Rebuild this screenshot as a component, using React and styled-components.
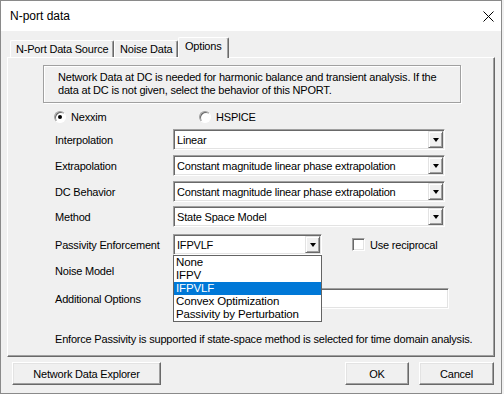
import React from 'react';
import styled, { createGlobalStyle } from 'styled-components';

const GlobalStyle = createGlobalStyle`
  html, body {
    margin: 0;
    padding: 0;
    background: #f0f0f0;
  }
  body {
    font-family: "Liberation Sans", Arial, sans-serif;
    font-size: 11px;
    letter-spacing: -0.2px;
    color: #000;
  }
`;

const Window = styled.div`
  width: 502px;
  height: 394px;
  box-sizing: border-box;
  border: 1px solid #8a8a8a;
  background: #f0f0f0;
  display: flex;
  flex-direction: column;
`;

const TitleBar = styled.div`
  height: 30px;
  flex: none;
  background: #fff;
  display: flex;
  align-items: center;
  justify-content: space-between;
  padding: 0 7px 0 9px;
  font-size: 12px;
  letter-spacing: 0;
`;

const Body = styled.div`
  flex: 1;
  display: flex;
  flex-direction: column;
  padding: 6px 6px 0 6px;
`;

const TabStrip = styled.div`
  height: 20px;
  display: flex;
  align-items: flex-end;
  padding-left: 3px;
  position: relative;
  z-index: 1;
`;

const Tab = styled.div`
  box-sizing: border-box;
  height: ${p => (p.$active ? 21 : 17)}px;
  margin-bottom: ${p => (p.$active ? -1 : 0)}px;
  width: ${p => p.$w}px;
  background: #f0f0f0;
  border-top: 1px solid #fff;
  border-left: 1px solid #fff;
  border-right: 1px solid #696969;
  box-shadow: inset -1px 0 0 #a0a0a0;
  border-radius: 2px 2px 0 0;
  padding: ${p => (p.$active ? '2px 0 0 6px' : '2px 0 0 5px')};
  line-height: 13px;
  white-space: nowrap;
`;

const Panel = styled.div`
  height: 300px;
  box-sizing: border-box;
  border-top: 1px solid #fff;
  border-left: 1px solid #fff;
  border-right: 1px solid #696969;
  border-bottom: 1px solid #696969;
  box-shadow: inset -1px -1px 0 #a0a0a0;
  display: flex;
  flex-direction: column;
`;

const InfoBox = styled.div`
  margin: 7px 0 0 35px;
  width: 418px;
  height: 38px;
  box-sizing: border-box;
  border: 1px solid #a0a0a0;
  box-shadow: 1px 1px 0 #fff, inset 1px 1px 0 #fff;
  padding: 5px 0 0 14px;
  line-height: 13px;
`;

const RadioRow = styled.div`
  margin: 7px 0 0 46px;
  height: 13px;
  display: flex;
  align-items: center;
`;

const RadioItem = styled.label`
  width: ${p => p.$w}px;
  display: flex;
  align-items: center;
  gap: 5px;
`;

const RadioCircle = styled.span`
  width: 12px;
  height: 12px;
  box-sizing: border-box;
  border-radius: 50%;
  border: 1px solid;
  border-color: #a0a0a0 #fff #fff #a0a0a0;
  background: #fff;
  box-shadow: inset 1px 1px 0 #696969;
  display: flex;
  align-items: center;
  justify-content: center;
  &::after {
    content: '';
    width: 4px;
    height: 4px;
    border-radius: 50%;
    background: ${p => (p.$on ? '#000' : 'transparent')};
  }
`;

const Row = styled.div`
  margin-top: ${p => p.$gap}px;
  padding-left: 47px;
  height: ${p => p.$h || 21}px;
  display: flex;
  align-items: center;
`;

const Label = styled.div`
  width: 118px;
  flex: none;
`;

const Combo = styled.div`
  position: relative;
  width: ${p => p.$w}px;
  height: 21px;
  box-sizing: border-box;
  border: 1px solid;
  border-color: #a0a0a0 #fff #fff #a0a0a0;
  box-shadow: inset 1px 1px 0 #696969, inset -1px -1px 0 #e3e3e3;
  background: #fff;
  display: flex;
  align-items: center;
  padding: 1px 1px 1px 3px;
`;

const ComboValue = styled.div`
  flex: 1;
  white-space: nowrap;
  overflow: hidden;
`;

const DropButton = styled.div`
  width: 15px;
  height: 17px;
  box-sizing: border-box;
  background: #f0f0f0;
  border: 1px solid;
  border-color: #e3e3e3 #696969 #696969 #e3e3e3;
  box-shadow: inset 1px 1px 0 #fff, inset -1px -1px 0 #a0a0a0;
  display: flex;
  align-items: center;
  justify-content: center;
  &::after {
    content: '';
    border-left: 3.5px solid transparent;
    border-right: 3.5px solid transparent;
    border-top: 4px solid #000;
    margin-top: 1px;
  }
`;

const DropList = styled.div`
  position: absolute;
  top: 20px;
  left: -1px;
  width: 149px;
  box-sizing: border-box;
  border: 1px solid #646464;
  background: #fff;
  z-index: 2;
`;

const DropItem = styled.div`
  height: 13px;
  line-height: 13px;
  padding-left: 2px;
  font-size: 11.5px;
  letter-spacing: -0.15px;
  background: ${p => (p.$sel ? '#0078d7' : '#fff')};
  color: ${p => (p.$sel ? '#fff' : '#000')};
`;

const Check = styled.label`
  margin-left: 30px;
  display: flex;
  align-items: center;
  gap: 5px;
`;

const CheckBox = styled.span`
  width: 13px;
  height: 13px;
  box-sizing: border-box;
  border: 1px solid;
  border-color: #a0a0a0 #fff #fff #a0a0a0;
  box-shadow: inset 1px 1px 0 #696969, inset -1px -1px 0 #e3e3e3;
  background: #fff;
`;

const TextField = styled.div`
  width: 276px;
  height: 21px;
  box-sizing: border-box;
  border: 1px solid;
  border-color: #a0a0a0 #fff #fff #a0a0a0;
  box-shadow: inset 1px 1px 0 #696969, inset -1px -1px 0 #e3e3e3;
  background: #fff;
`;

const Note = styled.div`
  margin: 24px 0 0 47px;
  line-height: 13px;
`;

const ButtonRow = styled.div`
  margin-top: 5px;
  display: flex;
  padding: 0 1px 0 5px;
`;

const Button = styled.div`
  width: ${p => p.$w}px;
  height: 23px;
  box-sizing: border-box;
  margin-left: ${p => p.$ml || 0}px;
  background: #f0f0f0;
  border: 1px solid;
  border-color: #fff #696969 #696969 #fff;
  box-shadow: inset -1px -1px 0 #a0a0a0, inset 1px 1px 0 #e3e3e3;
  display: flex;
  align-items: center;
  justify-content: center;
`;

const Spacer = styled.div`
  flex: 1;
`;

function CloseIcon() {
  return (
    <svg width="11" height="11" viewBox="0 0 11 11">
      <path d="M0.5 0.5 L10.5 10.5 M10.5 0.5 L0.5 10.5" stroke="#000" strokeWidth="1" fill="none" />
    </svg>
  );
}

const passivityOptions = ['None', 'IFPV', 'IFPVLF', 'Convex Optimization', 'Passivity by Perturbation'];

export default function App() {
  return (
    <>
      <GlobalStyle />
      <Window>
        <TitleBar>
          <span>N-port data</span>
          <CloseIcon />
        </TitleBar>
        <Body>
          <TabStrip>
            <Tab $w={104}>N-Port Data Source</Tab>
            <Tab $w={64}>Noise Data</Tab>
            <Tab $w={51} $active>Options</Tab>
          </TabStrip>
          <Panel>
            <InfoBox>
              Network Data at DC is needed for harmonic balance and transient analysis. If the
              <br />
              data at DC is not given, select the behavior of this NPORT.
            </InfoBox>
            <RadioRow>
              <RadioItem $w={145}><RadioCircle $on /> Nexxim</RadioItem>
              <RadioItem $w={100}><RadioCircle /> HSPICE</RadioItem>
            </RadioRow>
            <Row $gap={6}>
              <Label>Interpolation</Label>
              <Combo $w={272}><ComboValue>Linear</ComboValue><DropButton /></Combo>
            </Row>
            <Row $gap={5}>
              <Label>Extrapolation</Label>
              <Combo $w={272}><ComboValue>Constant magnitude linear phase extrapolation</ComboValue><DropButton /></Combo>
            </Row>
            <Row $gap={5}>
              <Label>DC Behavior</Label>
              <Combo $w={272}><ComboValue>Constant magnitude linear phase extrapolation</ComboValue><DropButton /></Combo>
            </Row>
            <Row $gap={4}>
              <Label>Method</Label>
              <Combo $w={272}><ComboValue>State Space Model</ComboValue><DropButton /></Combo>
            </Row>
            <Row $gap={7}>
              <Label>Passivity Enforcement</Label>
              <Combo $w={149}>
                <ComboValue>IFPVLF</ComboValue>
                <DropButton />
                <DropList>
                  {passivityOptions.map(o => (
                    <DropItem key={o} $sel={o === 'IFPVLF'}>{o}</DropItem>
                  ))}
                </DropList>
              </Combo>
              <Check><CheckBox /> Use reciprocal</Check>
            </Row>
            <Row $gap={5}>
              <Label>Noise Model</Label>
            </Row>
            <Row $gap={7}>
              <Label>Additional Options</Label>
              <TextField />
            </Row>
            <Note>Enforce Passivity is supported if state-space method is selected for time domain analysis.</Note>
          </Panel>
          <ButtonRow>
            <Button $w={149}>Network Data Explorer</Button>
            <Spacer />
            <Button $w={64}>OK</Button>
            <Button $w={75} $ml={10}>Cancel</Button>
          </ButtonRow>
        </Body>
      </Window>
    </>
  );
}
